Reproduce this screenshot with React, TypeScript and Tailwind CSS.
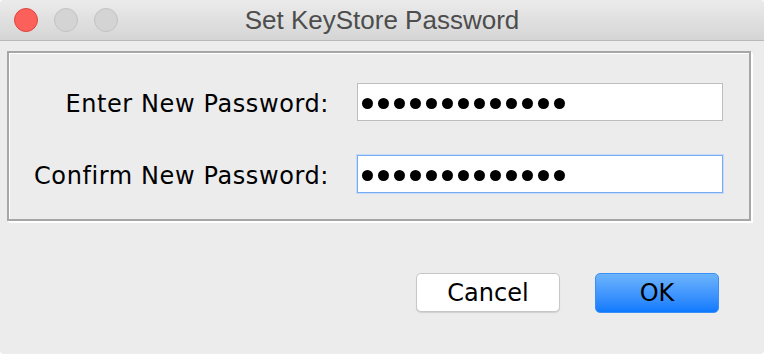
import React from "react";

const label = "font-['DejaVu_Sans',sans-serif] text-[24px] leading-none text-black";

function TrafficLight({ color }: { color: "red" | "gray" }) {
  return (
    <span
      className={
        color === "red"
          ? "h-[24px] w-[24px] rounded-full border border-[#e0443e] bg-[#fc605b]"
          : "h-[24px] w-[24px] rounded-full border border-[#c2c2c2] bg-[#d4d4d4]"
      }
    />
  );
}

/** Campo de contraseña con puntos dibujados. */
function PasswordField({ length, focused }: { length: number; focused?: boolean }) {
  return (
    <div
      className={
        focused
          ? "flex h-[38px] w-[366px] items-center gap-[5px] border border-[#78aaf0] bg-white pl-[4px] pt-[2px] shadow-[0_0_0_1px_#c5dcfa]"
          : "flex h-[38px] w-[366px] items-center gap-[5px] border border-[#bdbdbd] bg-white pl-[4px] pt-[2px]"
      }
    >
      {Array.from({ length }).map((_, i) => (
        <span key={i} className="h-[11px] w-[11px] shrink-0 rounded-full bg-black" />
      ))}
    </div>
  );
}

export default function App() {
  return (
    <div className="h-[354px] w-[764px] overflow-hidden rounded-[4px] bg-[#ececec]">
      <div className="relative flex h-[41px] items-center border-b border-[#b9b9b9] bg-gradient-to-b from-[#ebebeb] to-[#d5d5d5]">
        <div className="absolute left-[14px] top-[8px] flex gap-[16px]">
          <TrafficLight color="red" />
          <TrafficLight color="gray" />
          <TrafficLight color="gray" />
        </div>
        <p className="w-full text-center font-['Liberation_Sans',sans-serif] text-[26px] leading-none text-[#4d4d4d]">
          Set KeyStore Password
        </p>
      </div>

      <div className="ml-[7px] mt-[10px] flex h-[170px] w-[744px] flex-col gap-[34px] border-2 border-[#a6a6a6] pt-[30px] shadow-[inset_1px_1px_0_#fff,1px_1px_0_#fff,2px_2px_0_#fff]">
        <div className="flex items-center">
          <span className={`w-[320px] pt-[4px] text-right tracking-[0.6px] ${label}`}>
            Enter New Password:
          </span>
          <div className="ml-[28px]">
            <PasswordField length={13} />
          </div>
        </div>
        <div className="flex items-center">
          <span className={`w-[320px] pt-[4px] text-right tracking-[0.6px] ${label}`}>
            Confirm New Password:
          </span>
          <div className="ml-[28px]">
            <PasswordField length={13} focused />
          </div>
        </div>
      </div>

      <div className="mr-[45px] mt-[52px] flex justify-end gap-[35px]">
        <button
          type="button"
          className={`h-[39px] w-[144px] rounded-[5px] border border-[#c6c6c6] bg-white shadow-[0_1px_1px_rgba(0,0,0,0.12)] ${label}`}
        >
          Cancel
        </button>
        <button
          type="button"
          className={`h-[40px] w-[124px] rounded-[5px] border border-[#3a8ff7] bg-gradient-to-b from-[#6cb4fb] to-[#0b79fe] ${label}`}
        >
          OK
        </button>
      </div>
    </div>
  );
}
